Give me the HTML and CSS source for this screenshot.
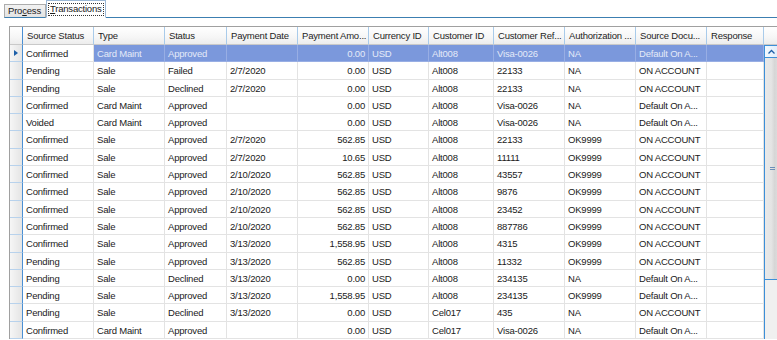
FILE: index.html
```html
<!DOCTYPE html>
<html lang="en">
<head>
    <meta charset="UTF-8">
    <meta name="viewport" content="width=device-width, initial-scale=1.0">
    <title>Transactions</title>
    <link rel="stylesheet" href="styles.css">
</head>
<body>
    <div class="tabs">
        <div class="tab">Pro<u>c</u>ess</div>
        <div class="tab active"><span class="focus"><u>T</u>ransactions</span></div>
        <div class="tab-line"></div>
    </div>

    <div class="page">
        <div class="grid">
            <div class="grid-main">
                <div class="row header">
                    <div class="cell rowhead"></div>
                    <div class="cell">Source Status</div>
                    <div class="cell">Type</div>
                    <div class="cell">Status</div>
                    <div class="cell">Payment Date</div>
                    <div class="cell">Payment Amo...</div>
                    <div class="cell">Currency ID</div>
                    <div class="cell">Customer ID</div>
                    <div class="cell">Customer Ref...</div>
                    <div class="cell">Authorization ...</div>
                    <div class="cell">Source Docu...</div>
                    <div class="cell">Response</div>
                </div>
                <div id="rows"></div>
            </div>
            <div class="vscroll">
                <div class="corner"></div>
                <div class="track">
                    <div class="arrow">
                        <svg width="7" height="5" viewBox="0 0 7 5"><path d="M0.5 4.5 L3.5 1.5 L6.5 4.5" fill="none" stroke="#1d5fa8" stroke-width="1.3"/></svg>
                    </div>
                    <div class="thumb"><span class="grip"></span></div>
                </div>
            </div>
        </div>
    </div>

    <script>
        // status, type, result, date, amount, currency, customer, ref, auth, source doc
        const transactions = [
            ['Confirmed', 'Card Maint', 'Approved', '', '0.00', 'USD', 'Alt008', 'Visa-0026', 'NA', 'Default On A...'],
            ['Pending', 'Sale', 'Failed', '2/7/2020', '0.00', 'USD', 'Alt008', '22133', 'NA', 'ON ACCOUNT'],
            ['Pending', 'Sale', 'Declined', '2/7/2020', '0.00', 'USD', 'Alt008', '22133', 'NA', 'ON ACCOUNT'],
            ['Confirmed', 'Card Maint', 'Approved', '', '0.00', 'USD', 'Alt008', 'Visa-0026', 'NA', 'Default On A...'],
            ['Voided', 'Card Maint', 'Approved', '', '0.00', 'USD', 'Alt008', 'Visa-0026', 'NA', 'Default On A...'],
            ['Confirmed', 'Sale', 'Approved', '2/7/2020', '562.85', 'USD', 'Alt008', '22133', 'OK9999', 'ON ACCOUNT'],
            ['Confirmed', 'Sale', 'Approved', '2/7/2020', '10.65', 'USD', 'Alt008', '11111', 'OK9999', 'ON ACCOUNT'],
            ['Confirmed', 'Sale', 'Approved', '2/10/2020', '562.85', 'USD', 'Alt008', '43557', 'OK9999', 'ON ACCOUNT'],
            ['Confirmed', 'Sale', 'Approved', '2/10/2020', '562.85', 'USD', 'Alt008', '9876', 'OK9999', 'ON ACCOUNT'],
            ['Confirmed', 'Sale', 'Approved', '2/10/2020', '562.85', 'USD', 'Alt008', '23452', 'OK9999', 'ON ACCOUNT'],
            ['Confirmed', 'Sale', 'Approved', '2/10/2020', '562.85', 'USD', 'Alt008', '887786', 'OK9999', 'ON ACCOUNT'],
            ['Confirmed', 'Sale', 'Approved', '3/13/2020', '1,558.95', 'USD', 'Alt008', '4315', 'OK9999', 'ON ACCOUNT'],
            ['Pending', 'Sale', 'Approved', '3/13/2020', '562.85', 'USD', 'Alt008', '11332', 'OK9999', 'ON ACCOUNT'],
            ['Pending', 'Sale', 'Declined', '3/13/2020', '0.00', 'USD', 'Alt008', '234135', 'NA', 'Default On A...'],
            ['Pending', 'Sale', 'Approved', '3/13/2020', '1,558.95', 'USD', 'Alt008', '234135', 'OK9999', 'Default On A...'],
            ['Pending', 'Sale', 'Declined', '3/13/2020', '0.00', 'USD', 'Cel017', '435', 'NA', 'ON ACCOUNT'],
            ['Confirmed', 'Card Maint', 'Approved', '', '0.00', 'USD', 'Cel017', 'Visa-0026', 'NA', 'Default On A...']
        ];

        let html = '';
        transactions.forEach((t, i) => {
            const selected = i === 0;
            html += `
                <div class="row${selected ? ' selected' : ''}">
                    <div class="cell rowhead">${selected ? '<span class="pointer"></span>' : ''}</div>
                    <div class="cell current">${t[0]}</div>
                    <div class="cell">${t[1]}</div>
                    <div class="cell">${t[2]}</div>
                    <div class="cell">${t[3]}</div>
                    <div class="cell num">${t[4]}</div>
                    <div class="cell">${t[5]}</div>
                    <div class="cell">${t[6]}</div>
                    <div class="cell">${t[7]}</div>
                    <div class="cell">${t[8]}</div>
                    <div class="cell">${t[9]}</div>
                    <div class="cell"></div>
                </div>
            `;
        });
        document.getElementById('rows').innerHTML = html;
    </script>
</body>
</html>
```

FILE: styles.css
```css
body {
    margin: 0;
    width: 777px;
    height: 340px;
    overflow: hidden;
    background: #ffffff;
    font-family: "Liberation Sans", Arial, sans-serif;
    font-size: 9.5px;
    letter-spacing: -0.2px;
    color: #1a1a1a;
}
u {
    text-decoration-thickness: 1px;
    text-underline-offset: 1px;
}

/* tab strip */
.tabs {
    display: flex;
    align-items: flex-end;
    height: 18px;
    padding-left: 4px;
}
.tab {
    height: 12px;
    line-height: 12px;
    padding: 0 4px 0 3px;
    border: 1px solid #acacac;
    background: linear-gradient(#f2f2f2, #e3e3e3);
    border-bottom: 1px solid #3c7fb1;
}
.tab.active {
    height: 16px;
    line-height: 16px;
    padding: 0 2px;
    background: #ffffff;
    border-color: #9bb8d6;
    border-bottom: 1px solid #ffffff;
}
.focus {
    display: inline-block;
    line-height: 10px;
    padding: 0 1px 1px 1px;
    outline: 1px dotted #333333;
}
.tab-line {
    flex: 1;
    border-bottom: 1px solid #3c7fb1;
}

/* grid */
.page {
    padding: 8px 0 0 9px;
}
.grid {
    display: flex;
    border-top: 1px solid #a0a0a0;
    border-left: 1px solid #a0a0a0;
    width: 790px;
}
.grid-main {
    width: 754px;
}
.row {
    display: grid;
    grid-template-columns: 13px 71px 71px 62px 71px 71px 60px 65px 71px 71px 71px 57px;
    height: 17.3px;
}
.cell {
    box-sizing: border-box;
    border-right: 1px solid #e3e3e3;
    border-bottom: 1px solid #e3e3e3;
    padding: 0 3px;
    line-height: 17px;
    white-space: nowrap;
    overflow: hidden;
}
.cell.num {
    text-align: right;
}
.header {
    height: 18px;
}
.header .cell {
    line-height: 17px;
    padding-left: 4px;
    background: linear-gradient(#ffffff, #f6f6f6 60%, #ececec);
    border-right: 1px solid #a9cbea;
    border-bottom: 1px solid #c9c9c9;
    color: #1e1e1e;
}
.rowhead {
    padding: 0;
    background: linear-gradient(90deg, #f6f6f6, #e4e4e4);
    border-right: 1px solid #4a8fd3;
    border-bottom: 1px solid #b8d2ec;
    position: relative;
}
.header .rowhead {
    border-right: 1px solid #4a8fd3;
}
.pointer {
    position: absolute;
    left: 4px;
    top: 5px;
    border-left: 4px solid #1d5fa8;
    border-top: 3.5px solid transparent;
    border-bottom: 3.5px solid transparent;
}
.selected .cell {
    background: #7b98dc;
    color: #e4eaf8;
    border-right-color: #98aee4;
    border-bottom-color: #98aee4;
}
.selected .cell.current {
    background: #ffffff;
    color: #1a1a1a;
    border-right-color: #e3e3e3;
    border-bottom-color: #e3e3e3;
}
.selected .rowhead {
    background: linear-gradient(90deg, #f6f6f6, #e4e4e4);
    border-right: 1px solid #4a8fd3;
    border-bottom: 1px solid #b8d2ec;
}

/* vertical scrollbar */
.vscroll {
    width: 17px;
    display: flex;
    flex-direction: column;
}
.corner {
    height: 18px;
    box-sizing: border-box;
    background: linear-gradient(#ffffff, #f6f6f6 60%, #ececec);
    border-bottom: 1px solid #c9c9c9;
}
.track {
    flex: 1;
    height: 320px;
    background: #f0f0f0;
    border-left: 1px solid #3c8fd8;
}
.arrow {
    height: 13px;
    box-sizing: border-box;
    border: 1px solid #3c8fd8;
    border-left: none;
    background: linear-gradient(90deg, #f4f9fe, #dcecfa);
    display: flex;
    align-items: center;
    padding-left: 3px;
}
.thumb {
    height: 222px;
    box-sizing: border-box;
    border-bottom: 1px solid #3c8fd8;
    background: linear-gradient(90deg, #e9e9e9, #e4e4e4 40%, #d6d6d6 60%, #e2e2e2);
    display: flex;
    align-items: center;
    padding-left: 5px;
}
.grip {
    width: 5px;
    height: 3px;
    border-top: 1px solid #6a8fb8;
    border-bottom: 1px solid #6a8fb8;
    box-sizing: border-box;
}
```
